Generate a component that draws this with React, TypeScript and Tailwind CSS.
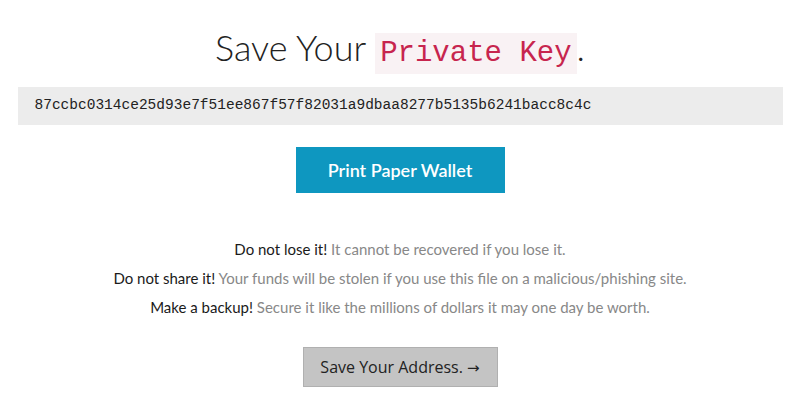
export default function App() {
    return (
        <div className="w-[800px] h-[415px] bg-white flex flex-col items-center font-['Lato',sans-serif] text-[#333]">
            <h1 className="mt-[23px] text-[36px] font-light leading-[48px] text-[#222]">
                Save Your{' '}
                <code className="font-['Liberation_Mono',monospace] text-[29px] text-[#c7254e] bg-[#f9f2f4] px-[5px] py-[4px]">
                    Private Key
                </code>
                .
            </h1>

            <div className="mt-[9px] w-[765px] h-[38px] bg-[#ececec] flex items-center px-[17px] font-['Liberation_Mono',monospace] text-[14.5px] text-[#222]">
                87ccbc0314ce25d93e7f51ee867f57f82031a9dbaa8277b5135b6241bacc8c4c
            </div>

            <button className="mt-[22px] w-[209px] h-[46px] bg-[#0e97c0] text-white text-[18px] font-semibold">
                Print Paper Wallet
            </button>

            <div className="mt-[46px] flex flex-col items-center gap-[9px] text-[15px] leading-[20px]">
                <p>
                    <span className="text-[#1a1a1a]">Do not lose it!</span>{' '}
                    <span className="text-[#888]">It cannot be recovered if you lose it.</span>
                </p>
                <p>
                    <span className="text-[#1a1a1a]">Do not share it!</span>{' '}
                    <span className="text-[#888]">Your funds will be stolen if you use this file on a malicious/phishing site.</span>
                </p>
                <p>
                    <span className="text-[#1a1a1a]">Make a backup!</span>{' '}
                    <span className="text-[#888]">Secure it like the millions of dollars it may one day be worth.</span>
                </p>
            </div>

            <button className="mt-[30px] w-[195px] h-[40px] bg-[#c4c4c4] border border-[#b0b0b0] text-[#222] text-[16px] font-['Open_Sans',sans-serif]">
                Save Your Address. <span className="font-['DejaVu_Sans',sans-serif] text-[15px]">→</span>
            </button>
        </div>
    );
}
